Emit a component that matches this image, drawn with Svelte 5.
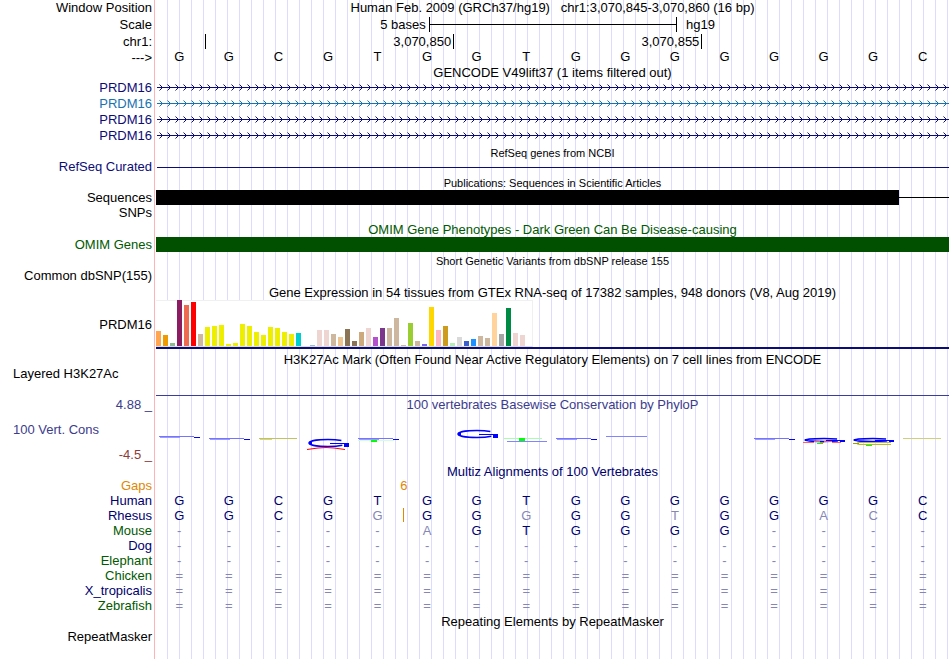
<script lang="ts">
	type Species = { name: string; tone: string; bases: string; gap?: boolean };
	type Mark = { x: number; y: number; w: number; kind: string };

	const reference = 'GGCGTGGTGGGGGGGC';

	const transcripts = [
		{ id: 'a', color: '#0c0c78' },
		{ id: 'b', color: '#1873b0' },
		{ id: 'c', color: '#0c0c78' },
		{ id: 'd', color: '#0c0c78' }
	];

	// [height in px, tissue colour]
	const tissues: [number, string][] = [
		[15, '#ffa54f'], [11, '#ee9a00'], [3, '#8fbc8f'], [46, '#8b1c62'], [41, '#ee6a50'], [44, '#ff0000'],
		[12, '#cdb79e'], [19, '#eeee00'], [20, '#eeee00'], [21, '#eeee00'], [2, '#eeee00'], [3, '#eeee00'],
		[22, '#eeee00'], [20, '#eeee00'], [14, '#eeee00'], [11, '#eeee00'], [19, '#eeee00'], [18, '#eeee00'],
		[14, '#eeee00'], [12, '#eeee00'], [13, '#00cdcd'], [0, '#ee82ee'], [1, '#9ac0cd'], [16, '#eed5d2'],
		[16, '#eed5d2'], [12, '#cdb79e'], [9, '#eec591'], [17, '#8b7355'], [5, '#8b7355'], [14, '#cdaa7d'],
		[18, '#eed5d2'], [9, '#b452cd'], [18, '#7a378b'], [18, '#cdb79e'], [28, '#cdb79e'], [1, '#cdb79e'],
		[23, '#9acd32'], [5, '#cdb79e'], [2, '#7a67ee'], [39, '#ffd700'], [16, '#ffb6c1'], [20, '#cd9b1d'],
		[3, '#b4eeb4'], [9, '#d9d9d9'], [5, '#3a5fcd'], [7, '#1e90ff'], [10, '#cdb79e'], [8, '#cdb79e'],
		[33, '#ffd39b'], [12, '#a6a6a6'], [38, '#008b45'], [13, '#eed5d2'], [11, '#eed5d2'], [0, '#ff00ff']
	];

	// flat conservation scores, drawn as thin strokes
	const marks: Mark[] = [
		{ x: 3, y: 23, w: 41, kind: 'blue' },
		{ x: 53, y: 25, w: 41, kind: 'blue' },
		{ x: 103, y: 25, w: 38, kind: 'olive' },
		{ x: 202, y: 25, w: 41, kind: 'blue' },
		{ x: 400, y: 25, w: 41, kind: 'blue' },
		{ x: 598, y: 25, w: 41, kind: 'blue' }
	];

	const species: Species[] = [
		{ name: 'Human', tone: 'navy', bases: reference },
		{ name: 'Rhesus', tone: 'navy', bases: 'GGCGGGGGGGTGGACC', gap: true },
		{ name: 'Mouse', tone: 'green', bases: '-----AGTGGGG----' },
		{ name: 'Dog', tone: 'navy', bases: '----------------' },
		{ name: 'Elephant', tone: 'green', bases: '----------------' },
		{ name: 'Chicken', tone: 'green', bases: '================' },
		{ name: 'X_tropicalis', tone: 'navy', bases: '================' },
		{ name: 'Zebrafish', tone: 'green', bases: '================' }
	];
</script>

{#snippet title(text: string, tone = '', small = false)}
	<div class="row">
		<div class="label"></div>
		<div class="data"><h2 class={tone} class:small>{text}</h2></div>
	</div>
{/snippet}

{#snippet stretchedG(x: number, y: number, h: number)}
	<g stroke="#0000ff" fill="none">
		<ellipse cx={x + 20} cy={y + h / 2} rx="19" ry={h / 2 - 0.5} stroke-width="1.5" pathLength="100" stroke-dasharray="85 15" stroke-dashoffset="-7" />
		<line x1={x + 1} x2={x + 4} y1={y + h / 2} y2={y + h / 2} stroke-width={h / 3} />
		<line x1={x + 22} x2={x + 41} y1={y + h / 2 + 0.5} y2={y + h / 2 + 0.5} />
		<rect x={x + 36} y={y + h / 2} width="5" height={h / 2} fill="#0000ff" stroke="none" />
	</g>
{/snippet}

<main class="browser">
	<div class="row">
		<div class="label">Window Position</div>
		<div class="data"><h1>Human Feb. 2009 (GRCh37/hg19)&nbsp;&nbsp; chr1:3,070,845-3,070,860 (16 bp)</h1></div>
	</div>
	<div class="row scale-row">
		<div class="label">Scale</div>
		<div class="data scale">
			<span class="scale-text">5 bases</span>
			<span class="scale-bar"></span>
			<span class="assembly">hg19</span>
		</div>
	</div>
	<div class="row">
		<div class="label low">chr1:</div>
		<div class="data ruler">
			<span class="tick first"></span>
			<span class="tick">3,070,850</span>
			<span class="tick">3,070,855</span>
		</div>
	</div>
	<div class="row sequence-row">
		<div class="label low">---&gt;</div>
		<div class="data bases">
			{#each reference as base}
				<span>{base}</span>
			{/each}
		</div>
	</div>

	{@render title('GENCODE V49lift37 (1 items filtered out)')}
	{#each transcripts as t (t.id)}
		<div class="row">
			<div class="label" style:color={t.color}>PRDM16</div>
			<div class="data">
				<svg class="transcript" aria-hidden="true">
					<defs>
						<pattern id="arrows-{t.id}" width="8" height="16" patternUnits="userSpaceOnUse">
							<path d="M4 5h1v1h1v1h1v1h-1v1h-1v1h-1v-1h1v-1h1v-1h-1v-1h-1z" fill={t.color} />
							<path d="M3 4h1v1h-1z M3 10h1v1h-1z" fill={t.color} opacity="0.5" />
						</pattern>
					</defs>
					<rect x="1" y="7" width="100%" height="1" fill={t.color} />
					<rect width="100%" height="16" fill="url(#arrows-{t.id})" />
				</svg>
			</div>
		</div>
	{/each}

	{@render title('RefSeq genes from NCBI', '', true)}
	<div class="row short">
		<div class="label refseq">RefSeq Curated</div>
		<div class="data item"><span class="line refseq"></span></div>
	</div>

	{@render title('Publications: Sequences in Scientific Articles', '', true)}
	<div class="row compact">
		<div class="label">Sequences</div>
		<div class="data item"><span class="block sequence"></span><span class="line"></span></div>
	</div>
	<div class="row">
		<div class="label">SNPs</div>
		<div class="data"></div>
	</div>

	{@render title('OMIM Gene Phenotypes - Dark Green Can Be Disease-causing', 'omim')}
	<div class="row compact">
		<div class="label omim">OMIM Genes</div>
		<div class="data item"><span class="block omim"></span></div>
	</div>

	{@render title('Short Genetic Variants from dbSNP release 155', '', true)}
	<div class="row">
		<div class="label">Common dbSNP(155)</div>
		<div class="data"></div>
	</div>

	{@render title('Gene Expression in 54 tissues from GTEx RNA-seq of 17382 samples, 948 donors (V8, Aug 2019)')}
	<div class="row gtex">
		<div class="label">PRDM16</div>
		<div class="data">
			<div class="expression">
				{#each tissues as [height, color]}
					<span style:height="{height}px" style:background={color}></span>
				{/each}
			</div>
			<div class="gene-model"></div>
		</div>
	</div>

	<div class="row histone-title">
		<div class="label"></div>
		<div class="data"><h2>H3K27Ac Mark (Often Found Near Active Regulatory Elements) on 7 cell lines from ENCODE</h2></div>
	</div>
	<div class="row histone">
		<div class="label start">Layered H3K27Ac</div>
		<div class="data"></div>
	</div>

	<div class="row scale-row">
		<div class="label phylop">4.88 _</div>
		<div class="data"><h2 class="phylop">100 vertebrates Basewise Conservation by PhyloP</h2></div>
	</div>
	<div class="row conservation">
		<div class="label">
			<span class="start phylop">100 Vert. Cons</span>
			<span class="negative">-4.5 _</span>
		</div>
		<div class="data">
			<svg class="logo" viewBox="0 0 793 50" preserveAspectRatio="none" aria-hidden="true">
				{#each marks as m}
					{#if m.kind === 'blue'}
						<rect x={m.x} y={m.y} width={m.w - 6} height="1" fill="#7474ff" />
						<rect x={m.x + 1} y={m.y + 1} width="20" height="1" fill="#9c9cff" />
						<rect x={m.x + m.w - 6} y={m.y + 1} width="6" height="1" fill="#0000ff" />
					{:else}
						<rect x={m.x} y={m.y} width={m.w} height="1" fill="#c3c35c" />
						<rect x={m.x + 1} y={m.y + 1} width="12" height="1" fill="#d6d68c" />
					{/if}
				{/each}

				{@render stretchedG(152, 26, 8)}
				<path d="M151 36.5 L162 35 Q170 34 178 35 L189 36.5" fill="none" stroke="#ff0000" />
				<rect x="202" y="27" width="36" height="1" fill="#d4ffd4" />
				<rect x="215" y="27" width="6" height="2" fill="#00ff00" />

				{@render stretchedG(301, 17, 8)}
				<rect x="348" y="25" width="38" height="1" fill="#a8ffa8" />
				<rect x="363" y="25" width="6" height="3" fill="#00ff00" />
				<rect x="351" y="28" width="40" height="1" fill="#8484ff" />
				<rect x="450" y="23" width="41" height="1" fill="#8484ff" />

				{@render stretchedG(648, 25, 4)}
				<path d="M647 29.5 H658 M658 28.5 H664 M664 29.5 H668 M668 28.5 H676 M676 29.5 H685" fill="none" stroke="#ff6060" />
				<rect x="661" y="30" width="6" height="1" fill="#00ff00" />

				{@render stretchedG(697, 25, 4)}
				<path d="M735 29.5 H703 Q698 30.5 703 31.5 H735" fill="none" stroke="#b8b83c" />
				<rect x="697" y="30" width="6" height="1" fill="#a0a000" />
				<rect x="710" y="32" width="6" height="1" fill="#00ff00" />
				<rect x="747" y="25" width="38" height="1" fill="#cfcf7c" />
			</svg>
		</div>
	</div>

	<div class="row compact">
		<div class="label"></div>
		<div class="data"><h2 class="navy">Multiz Alignments of 100 Vertebrates</h2></div>
	</div>
	<div class="row compact">
		<div class="label gaps">Gaps</div>
		<div class="data bases gaps"><span class="gap-count">6</span></div>
	</div>
	{#each species as s (s.name)}
		<div class="row compact">
			<div class="label {s.tone}">{s.name}</div>
			<div class="data bases navy">
				{#each s.bases as base, i}
					<span class:mismatch={base !== reference[i]}>{base}</span>
				{/each}
				{#if s.gap}<i class="gap-mark"></i>{/if}
			</div>
		</div>
	{/each}

	{@render title('Repeating Elements by RepeatMasker')}
	<div class="row">
		<div class="label">RepeatMasker</div>
		<div class="data"></div>
	</div>
	<div class="row rest">
		<div class="label"></div>
		<div class="data"></div>
	</div>
</main>

<style>
	:global(body) {
		margin: 0;
		background: #fff;
	}
	.browser {
		display: flex;
		flex-direction: column;
		min-height: 100vh;
		padding-right: 1px;
		box-sizing: border-box;
		font: 13px/16px 'Liberation Sans', Arial, sans-serif;
		color: #000;
	}
	.row {
		display: grid;
		grid-template-columns: 154px minmax(0, 1fr);
		min-height: 16px;
	}
	.label {
		padding-right: 2px;
		text-align: right;
		white-space: nowrap;
	}
	.label.low {
		height: 15px;
		line-height: 18px;
	}
	.data {
		position: relative;
		border-left: 1px solid #ffb4b4;
		padding-left: 1px;
		background: repeating-linear-gradient(to right, transparent 0 11px, #dcdcff 11px 12px) content-box;
	}
	h1,
	h2 {
		margin: 0;
		font-size: 13px;
		font-weight: normal;
		text-align: center;
		white-space: nowrap;
	}
	h2 {
		height: 16px;
		line-height: 18px;
	}
	h2.small {
		font-size: 11px;
	}
	.compact,
	.sequence-row {
		min-height: 15px;
		line-height: 15px;
	}
	.compact h2 {
		height: 15px;
	}
	.short {
		min-height: 14px;
		line-height: 14px;
	}
	.scale-row {
		min-height: 17px;
		line-height: 17px;
	}

	.navy {
		color: #00006e;
	}
	.green,
	.omim {
		color: #005a00;
	}
	.refseq {
		color: #0c0c78;
	}
	.phylop {
		color: #3c3c8c;
	}
	.negative {
		color: #8c3c3c;
	}
	.gaps {
		color: #e18700;
	}

	.scale,
	.ruler {
		display: flex;
	}
	.scale-text {
		flex: 0 0 34.4%;
		box-sizing: border-box;
		padding-right: 3px;
		text-align: right;
	}
	.scale-bar {
		flex: 0 0 31.3%;
		box-sizing: border-box;
		margin: 1px 0;
		border: solid #000;
		border-width: 0 1px;
		background: linear-gradient(#000, #000) 0 7px / 100% 1px no-repeat;
	}
	.assembly {
		padding-left: 9px;
	}
	.tick {
		flex: 0 0 31.3%;
		box-sizing: border-box;
		margin-top: 1px;
		height: 15px;
		padding-right: 2px;
		border-right: 1px solid #000;
		text-align: right;
	}
	.tick.first {
		flex-basis: 6.3%;
	}

	.bases {
		display: grid;
		grid-template-columns: repeat(16, minmax(0, 1fr));
		text-align: center;
	}
	.bases span {
		margin-left: -3px;
	}
	.bases .mismatch {
		color: #8686b4;
	}
	.bases .gap-count {
		grid-column: 5 / 7;
		margin-left: 0;
	}
	.gap-mark {
		position: absolute;
		left: 31.2%;
		top: 0;
		width: 1px;
		height: 14px;
		background: #e18700;
	}

	.transcript {
		display: block;
		width: 100%;
		height: 16px;
		shape-rendering: crispEdges;
	}
	.item {
		display: flex;
		align-items: center;
	}
	.line {
		flex: 1;
		height: 1px;
		background: currentColor;
	}
	.line.refseq {
		margin-left: 1px;
	}
	.block {
		flex: 1;
		align-self: stretch;
		background: #005000;
	}
	.block.sequence {
		flex: 0 0 93.7%;
		background: #000;
	}

	.gtex {
		height: 49px;
		line-height: 50px;
	}
	.gtex .data {
		display: flex;
		flex-direction: column;
		align-items: flex-start;
	}
	.expression {
		display: flex;
		align-items: flex-end;
		gap: 2px;
		height: 47px;
		box-sizing: border-box;
		border-right: 1px solid #f0f0f0;
		border-bottom: 1px solid #dcdcdc;
		background: linear-gradient(#f0f0f0, #f0f0f0) 0 0 / 100% 1px no-repeat #fff;
	}
	.expression span {
		width: 5px;
	}
	.gene-model {
		align-self: stretch;
		height: 2px;
		background: #0c0c78;
	}

	.histone-title {
		min-height: 18px;
	}
	.histone-title h2 {
		height: 18px;
		line-height: 21px;
	}
	.histone {
		min-height: 29px;
		line-height: 14px;
	}
	.histone .data::after {
		content: '';
		position: absolute;
		left: 1px;
		right: 0;
		bottom: 0;
		height: 1px;
		background: #3c3ca0;
	}
	.label.start,
	.label .start {
		padding-left: 13px;
		text-align: left;
	}
	.conservation {
		height: 50px;
	}
	.conservation .label {
		display: flex;
		flex-direction: column;
		justify-content: space-between;
		padding-top: 9px;
	}
	.logo {
		display: block;
		width: 100%;
		height: 50px;
	}
	.rest {
		flex: 1;
		min-height: 14px;
	}
</style>
